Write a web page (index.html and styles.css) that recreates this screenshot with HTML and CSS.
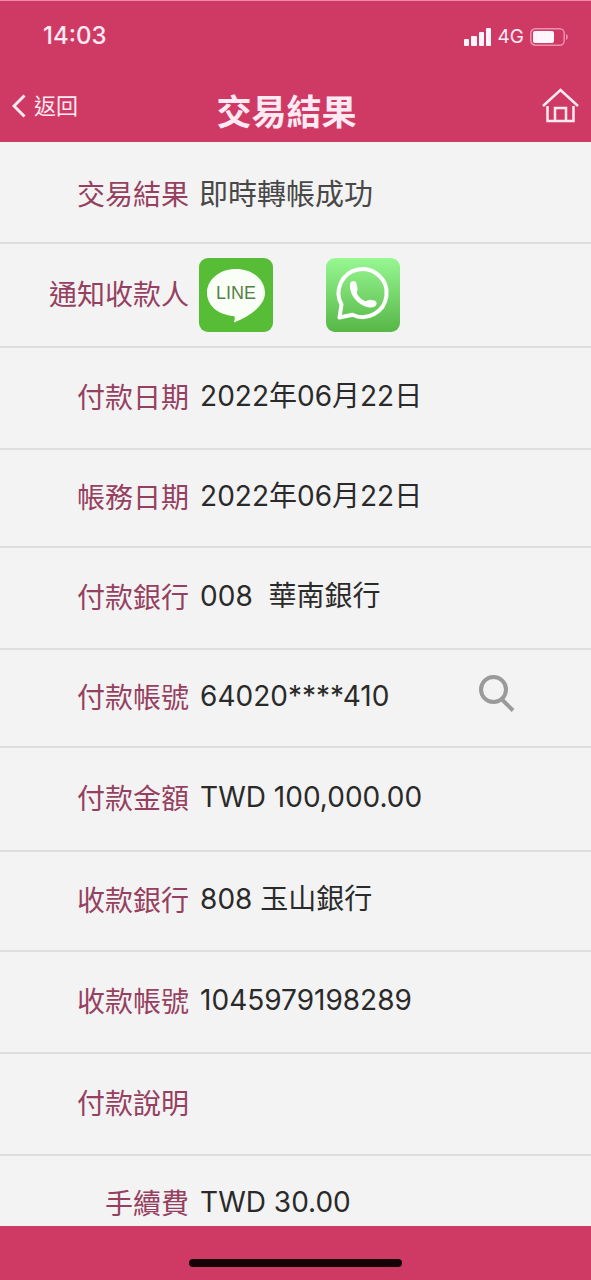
FILE: index.html
```html
<!DOCTYPE html>
<html lang="zh-Hant">
<head>
<meta charset="utf-8">
<meta name="viewport" content="width=device-width, initial-scale=1">
<title>交易結果</title>
<link rel="stylesheet" href="styles.css">
</head>
<body>
<div class="app">
  <header class="top">
    <div class="status">
      <span class="time">14:03</span>
      <div class="indicators">
        <svg class="signal" viewBox="0 0 28 18" aria-hidden="true">
          <rect x="0" y="11" width="5" height="7" rx="1"/>
          <rect x="7" y="8" width="6" height="10" rx="1"/>
          <rect x="15" y="4" width="5" height="14" rx="1"/>
          <rect x="22" y="0" width="5" height="18" rx="1"/>
        </svg>
        <span class="network">4G</span>
        <svg class="battery" viewBox="0 0 38 18" aria-hidden="true">
          <rect class="battery-case" x="0.8" y="0.8" width="33.4" height="16.4" rx="4.5"/>
          <rect x="3" y="3" width="21" height="12" rx="2"/>
          <path class="battery-tip" d="M36 6c2.4 1 2.4 5 0 6z"/>
        </svg>
      </div>
    </div>
    <nav class="nav">
      <button class="back" type="button">
        <svg class="chevron" viewBox="0 0 14 24" aria-hidden="true"><path d="M12.500 1.500L2 12l10.500 10.500"/></svg>
        返回
      </button>
      <h1 class="title">交易結果</h1>
      <button class="home" type="button" aria-label="首頁">
        <svg class="home-icon" viewBox="0 0 37 36" aria-hidden="true">
          <path d="M1 18L18.500 2L36 18M5.500 18v15h26V18M13 33V20h11v13"/>
        </svg>
      </button>
    </nav>
  </header>

  <main class="content">
    <dl class="details">
      <div class="row"><dt class="label">交易結果</dt><dd class="value result">即時轉帳成功</dd></div>
      <div class="row tall">
        <dt class="label">通知收款人</dt>
        <dd class="value share">
          <button class="share-button" type="button" aria-label="LINE">
            <svg class="share-icon" viewBox="0 0 74 74" aria-hidden="true">
              <rect width="74" height="74" rx="9" fill="#58bd36"/>
              <path d="M37 11C20.500 11 8 21.500 8 35c0 12 10.500 21.500 26 23 1.500.2 2 1 1.800 2.500L35 64.500c18-7 31-18 31-29.500C66 21.500 53.500 11 37 11z" fill="#f9fff7"/>
              <text class="line-text" x="37" y="41" text-anchor="middle">LINE</text>
            </svg>
          </button>
          <button class="share-button" type="button" aria-label="WhatsApp">
            <svg class="share-icon" viewBox="0 0 74 74" aria-hidden="true">
              <defs><linearGradient id="whatsapp-green" x1="0" y1="0" x2="0" y2="1"><stop offset="0" stop-color="#97f893"/><stop offset="1" stop-color="#56b646"/></linearGradient></defs>
              <rect width="74" height="74" rx="9" fill="url(#whatsapp-green)"/>
              <path d="M13.500 59.500l2-13A24 24 0 1 1 26.500 56.800z" fill="none" stroke="#fff" stroke-width="4" stroke-linejoin="round"/>
              <path d="M24 26c.5-3.500 5.500-4 6.500-.5l1 4.500c.4 2.500-1 3.500-.5 5.500 1.500 3.500 4.500 6 8 7.500 1.800.3 2.500-1.500 5-1.300l4.500.8c3 .8 2.800 5-.3 6.300-3.500 1.500-9.500.3-14.500-3.300C27.500 41 23 33 24 26z" fill="#fff"/>
            </svg>
          </button>
        </dd>
      </div>
      <div class="row"><dt class="label">付款日期</dt><dd class="value">2022年06月22日</dd></div>
      <div class="row short"><dt class="label">帳務日期</dt><dd class="value">2022年06月22日</dd></div>
      <div class="row"><dt class="label">付款銀行</dt><dd class="value">008&nbsp; 華南銀行</dd></div>
      <div class="row short">
        <dt class="label">付款帳號</dt>
        <dd class="value">64020****410
          <button class="search" type="button" aria-label="查詢">
            <svg class="search-icon" viewBox="0 0 36 38" aria-hidden="true"><circle cx="14.500" cy="14.500" r="12.500"/><path d="M22.500 24l11.500 11.500"/></svg>
          </button>
        </dd>
      </div>
      <div class="row tall"><dt class="label">付款金額</dt><dd class="value">TWD 100,000.00</dd></div>
      <div class="row compact"><dt class="label">收款銀行</dt><dd class="value">808 玉山銀行</dd></div>
      <div class="row"><dt class="label">收款帳號</dt><dd class="value">1045979198289</dd></div>
      <div class="row"><dt class="label">付款說明</dt><dd class="value"></dd></div>
      <div class="row short"><dt class="label">手續費</dt><dd class="value">TWD 30.00</dd></div>
    </dl>
  </main>

  <footer class="bottom"><div class="home-indicator"></div></footer>
</div>
</body>
</html>
```
FILE: styles.css
```css
* { box-sizing: border-box; }

body {
  margin: 0;
  background: #f3f3f3;
  color: #2a2a2a;
  font-family: Inter, "Noto Sans CJK TC", sans-serif;
}

button {
  display: flex;
  align-items: center;
  padding: 0;
  border: 0;
  background: none;
  color: inherit;
  font: inherit;
}

svg { display: block; }

.app {
  display: flex;
  flex-direction: column;
  height: 100vh;
}

.top {
  flex: none;
  border-top: 1px solid #f08aa6;
  background: #cf3a64;
  color: #ffeaf4;
}

.status {
  display: flex;
  align-items: center;
  justify-content: space-between;
  height: 68px;
  padding: 0 23px 0 43px;
}

.time {
  font-size: 24px;
  font-weight: 500;
}

.indicators {
  display: flex;
  align-items: center;
  gap: 6px;
  padding-top: 3px;
  fill: #fff5fa;
}

.signal { width: 28px; height: 18px; }
.network { font-size: 19px; line-height: 20px; }
.battery { width: 38px; height: 18px; }
.battery-case { fill: none; stroke: #ee8fae; stroke-width: 1.5; }
.battery-tip { fill: #ee8fae; }

.nav {
  display: grid;
  grid-template-columns: 1fr auto 1fr;
  align-items: center;
  height: 73px;
  padding: 0 12px;
}

.back {
  gap: 8px;
  font-size: 22px;
  line-height: 32px;
}

.chevron {
  width: 14px;
  height: 24px;
  fill: none;
  stroke: currentColor;
  stroke-width: 3;
}

.title {
  margin: 0;
  padding: 12px 18px 0 0;
  font-size: 35px;
  line-height: 48px;
  font-weight: 700;
}

.home { justify-self: end; }

.home-icon {
  width: 37px;
  height: 36px;
  fill: none;
  stroke: currentColor;
  stroke-width: 2.5;
}

.content {
  flex: 1;
  min-height: 0;
  overflow: hidden;
}

.details { margin: 0; }

.row {
  display: flex;
  align-items: center;
  gap: 10px;
  min-height: 102px;
  border-bottom: 2px solid #dedede;
}

.row:first-child { padding-top: 6px; }
.row.compact { min-height: 100px; }
.row.short { min-height: 98px; }
.row.tall { min-height: 104px; }

.label {
  flex: none;
  width: 32%;
  color: #96405f;
  font-size: 28px;
  line-height: 40px;
  text-align: right;
}

.value {
  display: flex;
  flex: 1;
  align-items: center;
  margin: 0;
  padding: 0 0 4px 1px;
  font-size: 28px;
  line-height: 40px;
}

.value.result {
  padding: 0;
  color: #484848;
  font-size: 29px;
}

.value.share {
  gap: 53px;
  padding: 0;
}

.share-icon { width: 74px; height: 74px; }

.line-text {
  fill: #55804a;
  font-family: "Liberation Sans", sans-serif;
  font-size: 18px;
}

.search {
  margin: 0 76px 0 auto;
  padding-bottom: 4px;
}

.search-icon {
  width: 36px;
  height: 38px;
  fill: none;
  stroke: #9a9a9a;
  stroke-width: 4;
}

.bottom {
  display: flex;
  flex: none;
  align-items: center;
  justify-content: center;
  height: 54px;
  padding-top: 20px;
  background: #cf3a64;
}

.home-indicator {
  width: 36%;
  height: 8px;
  border-radius: 4px;
  background: #140006;
}
```
